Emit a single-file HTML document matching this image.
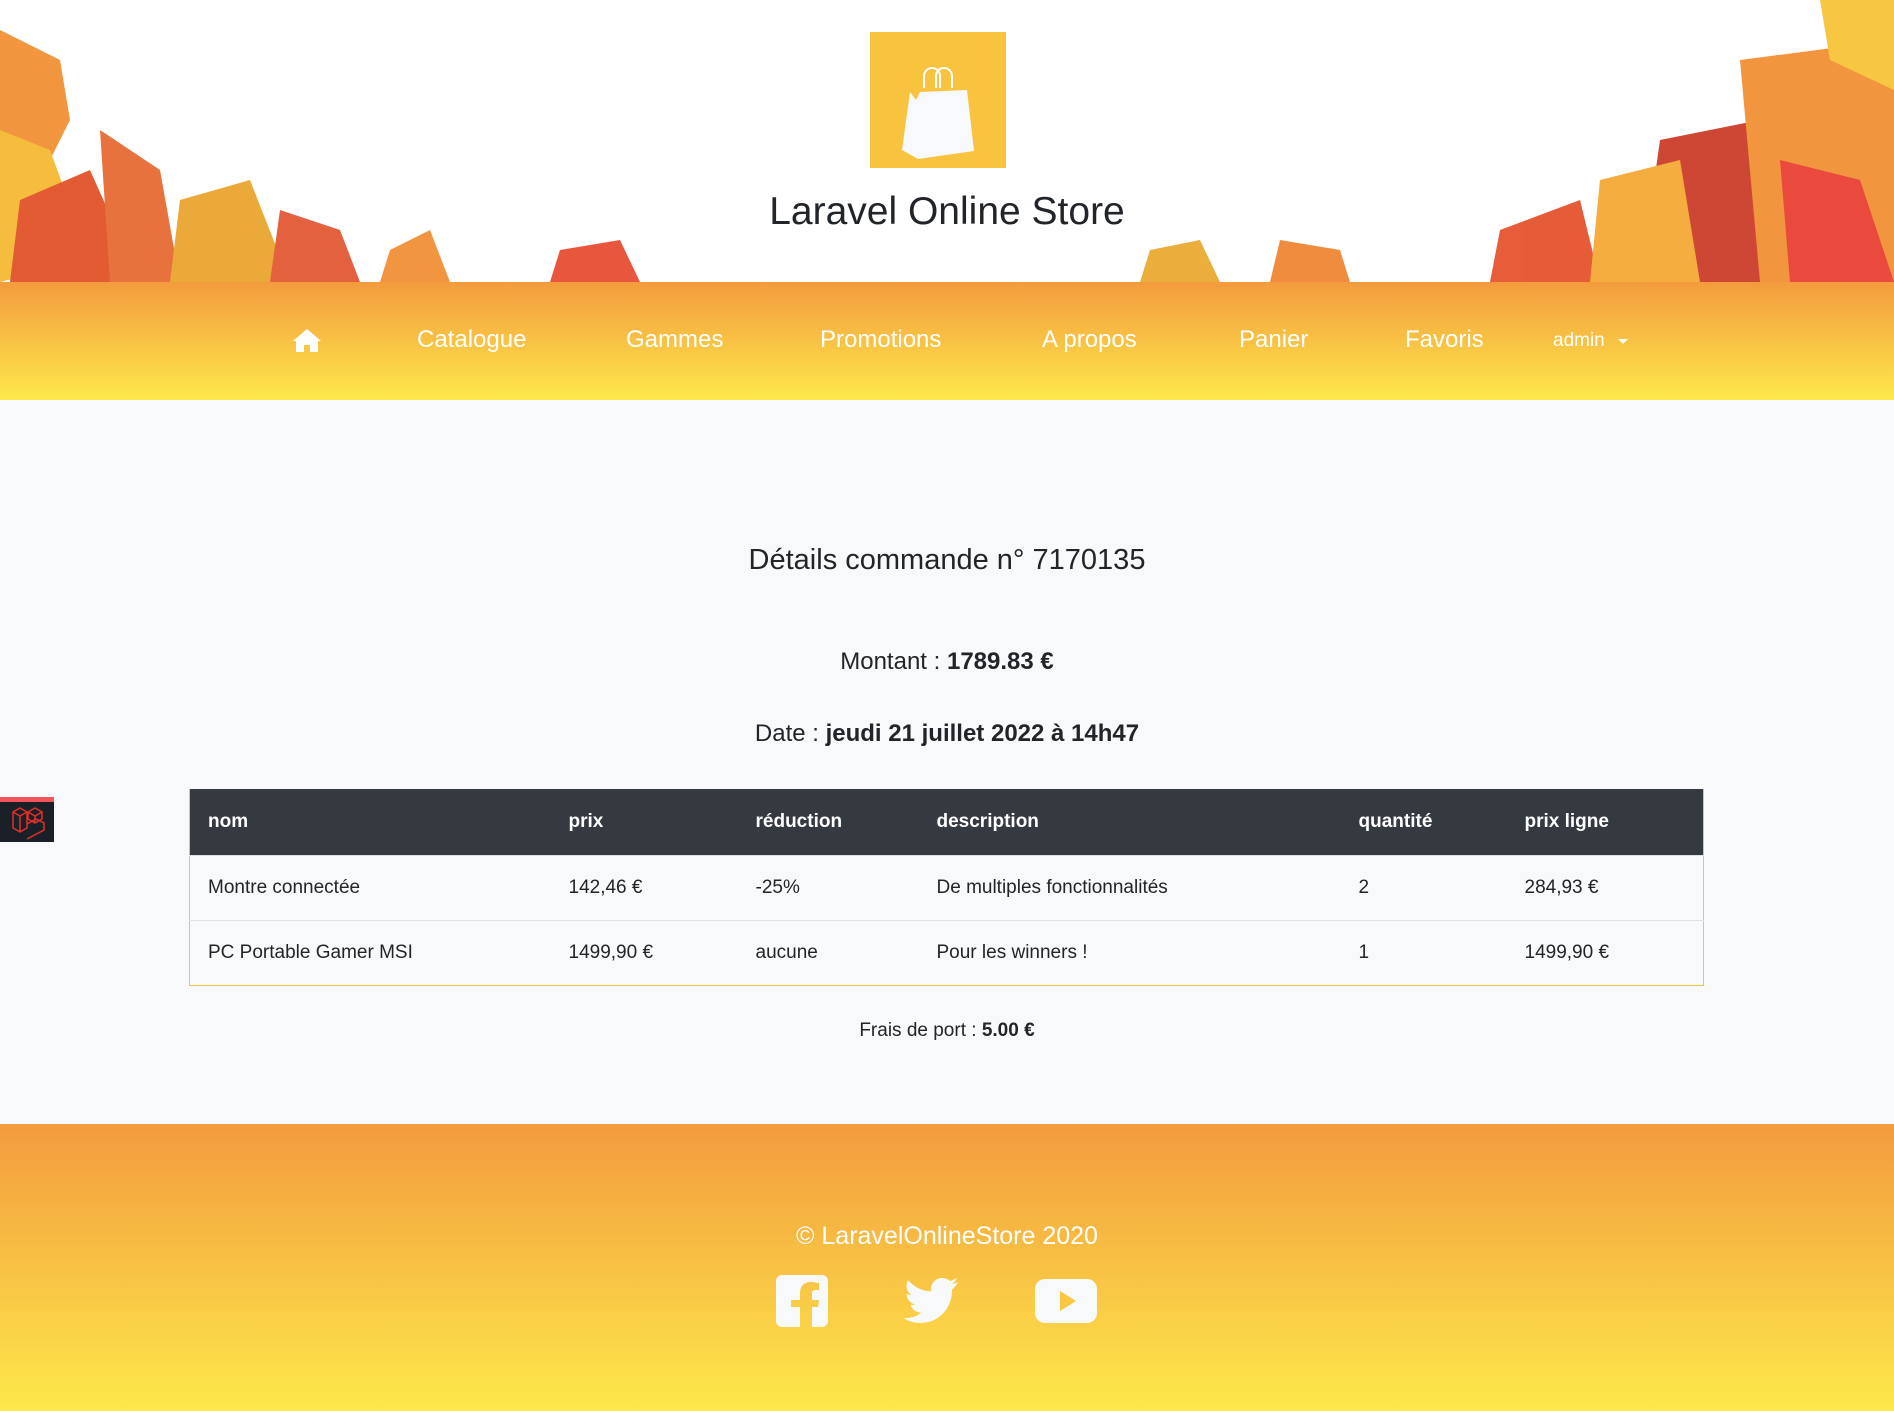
<!DOCTYPE html>
<html><head><meta charset="utf-8"><style>
*{margin:0;padding:0;box-sizing:border-box}
body{width:1894px;height:1411px;overflow:hidden;background:#f8f9fa;font-family:"Liberation Sans",sans-serif;color:#212529;position:relative}
.abs{position:absolute}
header{position:absolute;left:0;top:0;width:1894px;height:282px;background:#fff;overflow:hidden}
nav{position:absolute;left:0;top:282px;width:1894px;height:118px;background:linear-gradient(#f39b3e,#fde84a)}
.c{position:absolute;left:0;width:1894px;text-align:center}
table{position:absolute;left:189px;top:789px;width:1515px;border-collapse:collapse;font-size:19px}
th{background:#343a40;color:#fff;text-align:left;height:66px;font-weight:bold;padding-left:18px}
td{height:65px;padding-left:18px;border-top:1px solid #dee2e6}
table{border:1px solid #f5c542;border-top:none}
footer{position:absolute;left:0;top:1124px;width:1894px;height:287px;background:linear-gradient(#f39b3e,#fde84a)}
</style></head><body>
<header>
<svg width="1894" height="282" style="position:absolute;left:0;top:0">
<g opacity="0.9">
<path d="M0 30 L60 60 L70 120 L40 180 L0 200Z" fill="#f08a2a"/>
<path d="M0 130 L50 150 L90 260 L0 282Z" fill="#f6b52a"/>
<path d="M20 200 L90 170 L140 282 L10 282Z" fill="#e04a1e"/>
<path d="M100 130 L160 170 L180 282 L110 282Z" fill="#e5632a"/>
<path d="M180 200 L250 180 L290 282 L170 282Z" fill="#e8a024"/>
<path d="M280 210 L340 230 L360 282 L270 282Z" fill="#e0502a"/>
<path d="M390 250 L430 230 L450 282 L380 282Z" fill="#f0892c"/>
<path d="M560 250 L620 240 L640 282 L550 282Z" fill="#e44428"/>
<path d="M1150 250 L1200 240 L1220 282 L1140 282Z" fill="#e9a628"/>
<path d="M1280 240 L1340 250 L1350 282 L1270 282Z" fill="#ee8029"/>
<path d="M1500 230 L1580 200 L1600 282 L1490 282Z" fill="#e44a23"/>
<path d="M1660 140 L1760 120 L1800 282 L1640 282Z" fill="#c9341f"/>
<path d="M1740 60 L1894 40 L1894 282 L1760 282Z" fill="#f08a2a"/>
<path d="M1820 0 L1894 0 L1894 90 L1830 60Z" fill="#f7c230"/>
<path d="M1780 160 L1860 180 L1894 282 L1790 282Z" fill="#e8362a"/>
<path d="M1600 180 L1680 160 L1700 282 L1590 282Z" fill="#f3a52a"/>
</g>
</svg>
<div class="abs" style="left:870px;top:32px;width:136px;height:136px;background:#f8c43f">
<svg width="136" height="136" viewBox="0 0 136 136">
<path d="M54 56 V44 a8 8 0 0 1 16 0 V56 M66 56 V44 a8 8 0 0 1 16 0 V56" stroke="#fff" stroke-width="2" fill="none"/>
<path d="M40 60 L46 68 L50 60 L97 58 L104 119 L48 127 L32 118Z" fill="#f8f9fd"/>
</svg></div>
<div class="c" style="top:190px;font-size:39px;color:#212529">Laravel Online Store</div>
</header>
<nav></nav>
<svg class="abs" style="left:292px;top:327px" width="30" height="26" viewBox="0 0 30 26"><path d="M15 2 L1 14 L4 14 L4 25 L12 25 L12 18 L18 18 L18 25 L26 25 L26 14 L29 14Z" fill="#fff"/></svg>
<span style="position:absolute;top:326px;left:417px;color:#fff;font-size:24px">Catalogue</span>
<span style="position:absolute;top:326px;left:626px;color:#fff;font-size:24px">Gammes</span>
<span style="position:absolute;top:326px;left:820px;color:#fff;font-size:24px">Promotions</span>
<span style="position:absolute;top:326px;left:1042px;color:#fff;font-size:24px">A propos</span>
<span style="position:absolute;top:326px;left:1239px;color:#fff;font-size:24px">Panier</span>
<span style="position:absolute;top:326px;left:1405px;color:#fff;font-size:24px">Favoris</span>
<span style="position:absolute;top:330px;left:1553px;color:#fff;font-size:19px">admin</span>
<div class="abs" style="left:1618px;top:339px;width:0;height:0;border-left:5px solid transparent;border-right:5px solid transparent;border-top:5px solid #fff"></div>

<div class="c" style="top:544px;font-size:29px">Détails commande n° 7170135</div>
<div class="c" style="top:648px;font-size:24px">Montant : <b>1789.83 €</b></div>
<div class="c" style="top:720px;font-size:24px">Date : <b>jeudi 21 juillet 2022 à 14h47</b></div>

<div class="abs" style="left:0;top:797px;width:54px;height:45px;background:#1b1f27;border-top:5px solid #f4555a">
<svg width="54" height="40" viewBox="0 0 54 40"><g stroke="#e0302a" stroke-width="1.5" fill="none"><path d="M13 10 l7-4 7 4 v16 l-7 4-7-4z M13 10 l7 4 7-4 M20 14 v16 M27 22 l9-5 8 4 v7 l-17 9"/><path d="M28 10 l7-4 7 4 v7 l-7 4-7-4z M28 10 l7 4 7-4 M35 14 v7"/></g></svg></div>

<table>
<tr><th style="width:361px">nom</th><th style="width:187px">prix</th><th style="width:181px">réduction</th><th style="width:422px">description</th><th style="width:166px">quantité</th><th>prix ligne</th></tr>
<tr><td>Montre connectée</td><td>142,46 €</td><td>-25%</td><td>De multiples fonctionnalités</td><td>2</td><td>284,93 €</td></tr>
<tr><td>PC Portable Gamer MSI</td><td>1499,90 €</td><td>aucune</td><td>Pour les winners !</td><td>1</td><td>1499,90 €</td></tr>
</table>
<div class="c" style="top:1020px;font-size:19px">Frais de port : <b>5.00 €</b></div>

<footer></footer>
<div class="c" style="top:1222px;font-size:25px;color:#fff">© LaravelOnlineStore 2020</div>
<svg class="abs" style="left:776px;top:1275px" width="52" height="52" viewBox="0 0 52 52"><path d="M6 0 H46 a6 6 0 0 1 6 6 V46 a6 6 0 0 1 -6 6 H36 V32 H42 L43 25 H36 V19 c0-3 1-4 4-4 H43 V8 c-2 0-5-1-8-1 c-7 0-11 4-11 11 V25 H15 V32 H24 V52 H6 a6 6 0 0 1 -6 -6 V6 a6 6 0 0 1 6 -6z" fill="#f8f9fa"/></svg>
<svg class="abs" style="left:901px;top:1276px" width="58" height="50" viewBox="0 0 58 50"><path d="M57 6 c-2 1-4 1.5-6 2 c2-1.5 4-3.5 5-6 c-2 1-4 2-7 3 c-2-2-5-3-8-3 c-6 0-11 5-11 11 c0 1 0 2 .3 2.5 C21 15 13 11 7 4 c-1 2-1.5 4-1.5 6 c0 4 2 7 5 9 c-2 0-4-.6-5-1.4 c0 5.5 4 10 9 11 c-1 .3-2 .4-3 .4 c-.7 0-1.4 0-2-.2 c1.4 4.5 5.5 7.7 10.5 7.8 C16 40 11 42 5 42 c-1 0-2 0-3-.1 C7 45 13 47 19 47 C40 47 51 30 51 15 v-1.5 C53.5 11.5 55.5 9 57 6z" fill="#f8f9fa"/></svg>
<svg class="abs" style="left:1035px;top:1279px" width="62" height="44" viewBox="0 0 62 44"><rect x="0" y="0" width="62" height="44" rx="10" fill="#f8f9fa"/><path d="M25 12 L41 22 L25 32Z" fill="#fbc743"/></svg>
</body></html>
